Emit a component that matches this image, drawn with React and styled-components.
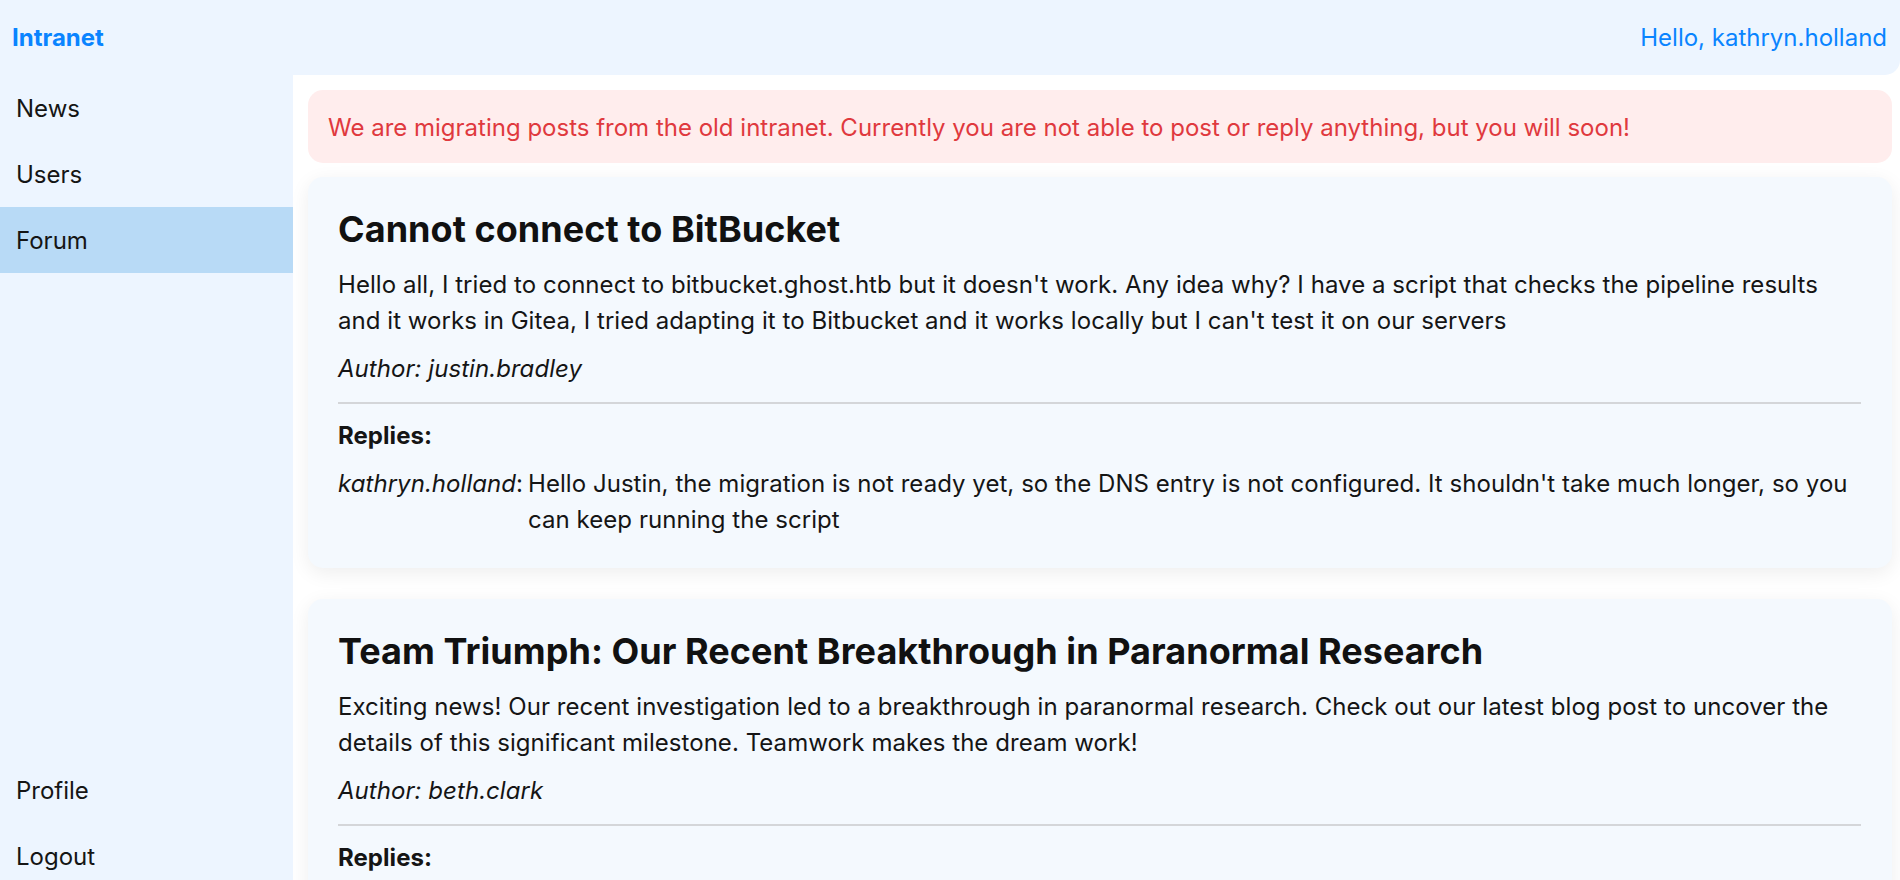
import React from "react";
import styled, { createGlobalStyle } from "styled-components";

const GlobalStyle = createGlobalStyle`
  html, body {
    margin: 0;
    padding: 0;
    background: #ffffff;
    font-family: Inter, "Noto Sans", "Liberation Sans", sans-serif;
    color: #151515;
  }
  * { box-sizing: border-box; }
`;

const Shell = styled.div`
  display: grid;
  grid-template-rows: 75px 1fr;
  grid-template-columns: 293px 1fr;
  height: 100vh;
  overflow: hidden;
`;

const Header = styled.header`
  grid-column: 1 / 3;
  display: flex;
  align-items: center;
  justify-content: space-between;
  padding: 0 13px 0 12px;
  background: #edf5ff;
  border-bottom-right-radius: 15px;
  font-size: 24px;
  line-height: 36px;
  color: #0a84ff;
`;

const Brand = styled.a`
  font-weight: 700;
  color: #0a84ff;
  text-decoration: none;
`;

const Greeting = styled.span`
  color: #0a84ff;
`;

const Sidebar = styled.nav`
  display: flex;
  flex-direction: column;
  justify-content: space-between;
  background: #edf5ff;
  min-height: 0;
`;

const NavGroup = styled.div`
  display: flex;
  flex-direction: column;
  margin-bottom: ${(p) => (p.$bottom ? "-9px" : "0")};
`;

const NavItem = styled.a`
  display: block;
  padding: 16px 16px 14px;
  font-size: 24px;
  line-height: 36px;
  color: #151515;
  text-decoration: none;
  background: ${(p) => (p.$active ? "#b8daf6" : "transparent")};
`;

const Main = styled.main`
  overflow-y: auto;
  scrollbar-width: none;
  padding: 15px 8px 40px 15px;
  display: flex;
  flex-direction: column;
  gap: 14px;
  &::-webkit-scrollbar { display: none; }
`;

const Alert = styled.div`
  background: #ffeded;
  color: #e0393e;
  border-radius: 15px;
  padding: 20px 20px 17px;
  font-size: 24px;
  line-height: 36px;
`;

const PostList = styled.div`
  display: flex;
  flex-direction: column;
  gap: 31px;
`;

const Card = styled.article`
  background: #f4f9fe;
  border-radius: 15px;
  padding: 30px 31px 30px 30px;
  box-shadow: 0 5px 20px rgba(0, 0, 0, 0.07);
  font-size: 24px;
  line-height: 36px;
  letter-spacing: 0.05px;
`;

const Title = styled.h2`
  margin: 0 0 15px;
  font-size: 36px;
  line-height: 1.25;
  font-weight: 700;
  color: #111;
  letter-spacing: 0.05px;
`;

const Paragraph = styled.p`
  margin: 0 0 12px;
`;

const Author = styled.p`
  margin: 0;
  font-style: italic;
`;

const Divider = styled.hr`
  border: none;
  height: 2px;
  background: #d4d6d9;
  margin: 15px 0 14px;
`;

const RepliesLabel = styled.div`
  font-weight: 700;
  margin-bottom: 12px;
`;

const ReplyRow = styled.div`
  display: flex;
  align-items: flex-start;
`;

const ReplyAuthor = styled.span`
  flex: none;
  em { font-style: italic; }
`;

const ReplyText = styled.span`
  padding-left: 5px;
`;

const posts = [
  {
    title: "Cannot connect to BitBucket",
    body:
      "Hello all, I tried to connect to bitbucket.ghost.htb but it doesn't work. Any idea why? I have a script that checks the pipeline results and it works in Gitea, I tried adapting it to Bitbucket and it works locally but I can't test it on our servers",
    author: "justin.bradley",
    replies: [
      {
        author: "kathryn.holland",
        text:
          "Hello Justin, the migration is not ready yet, so the DNS entry is not configured. It shouldn't take much longer, so you can keep running the script",
      },
    ],
  },
  {
    title: "Team Triumph: Our Recent Breakthrough in Paranormal Research",
    body:
      "Exciting news! Our recent investigation led to a breakthrough in paranormal research. Check out our latest blog post to uncover the details of this significant milestone. Teamwork makes the dream work!",
    author: "beth.clark",
    replies: [],
  },
];

export default function App() {
  return (
    <>
      <GlobalStyle />
      <Shell>
        <Header>
          <Brand href="#">Intranet</Brand>
          <Greeting>Hello, kathryn.holland</Greeting>
        </Header>
        <Sidebar>
          <NavGroup>
            <NavItem href="#">News</NavItem>
            <NavItem href="#">Users</NavItem>
            <NavItem href="#" $active>Forum</NavItem>
          </NavGroup>
          <NavGroup $bottom>
            <NavItem href="#">Profile</NavItem>
            <NavItem href="#">Logout</NavItem>
          </NavGroup>
        </Sidebar>
        <Main>
          <Alert>
            We are migrating posts from the old intranet. Currently you are not able to post or reply anything, but you will soon!
          </Alert>
          <PostList>
            {posts.map((post) => (
              <Card key={post.title}>
                <Title>{post.title}</Title>
                <Paragraph>{post.body}</Paragraph>
                <Author>Author: {post.author}</Author>
                <Divider />
                <RepliesLabel>Replies:</RepliesLabel>
                {post.replies.map((r, i) => (
                  <ReplyRow key={i}>
                    <ReplyAuthor>
                      <em>{r.author}</em>:
                    </ReplyAuthor>
                    <ReplyText>{r.text}</ReplyText>
                  </ReplyRow>
                ))}
              </Card>
            ))}
          </PostList>
        </Main>
      </Shell>
    </>
  );
}
